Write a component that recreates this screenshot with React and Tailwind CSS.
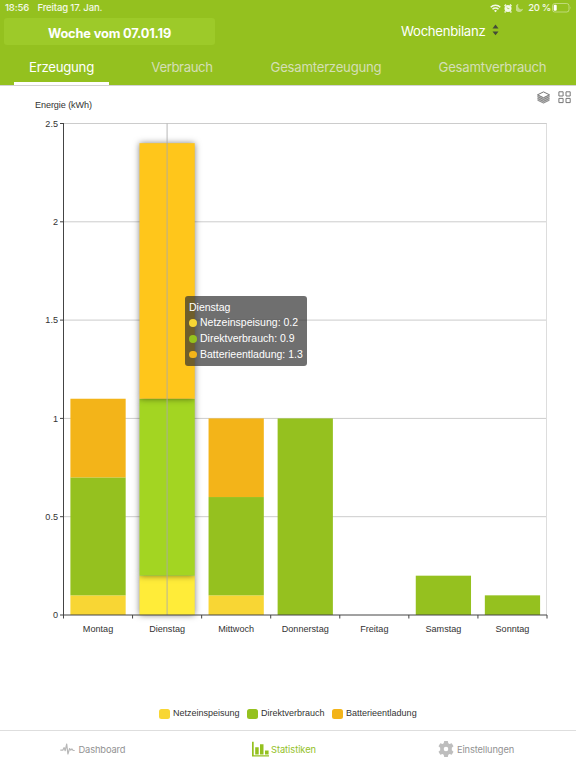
const days = [
  { name: "Montag", values: [0.1, 0.6, 0.4] },
  { name: "Dienstag", values: [0.2, 0.9, 1.3] },
  { name: "Mittwoch", values: [0.1, 0.5, 0.4] },
  { name: "Donnerstag", values: [0, 1, 0] },
  { name: "Freitag", values: [0, 0, 0] },
  { name: "Samstag", values: [0, 0.2, 0] },
  { name: "Sonntag", values: [0, 0.1, 0] }
];

const series = [
  { name: "Netzeinspeisung", color: "#f8d634", active: "#ffec39" },
  { name: "Direktverbrauch", color: "#95c11f", active: "#a3d522" },
  { name: "Batterieentladung", color: "#f3b419", active: "#ffc61b" }
];

const ticks = [0, 0.5, 1, 1.5, 2, 2.5];
const activeDay = 1;

const LEFT = 63.5;
const RIGHT = 547;
const BASE = 529;
const UNIT = 196.6;
const STEP = (RIGHT - LEFT) / days.length;

function StatusBar() {
  return (
    <div className="flex h-4 items-center pl-[5px] pr-1 text-[9.5px] font-medium text-white/90">
      <span className="w-[32.5px] tracking-[-0.1px]">18:56</span>
      <span className="tracking-[-0.13px]">Freitag 17. Jan.</span>
      <svg className="ml-auto" width="11" height="9" viewBox="0 0 11 9" fill="none" stroke="currentColor" strokeWidth="1.5">
        <path d="M.7 3.3a6.8 6.8 0 0 1 9.6 0M2.5 5.2a4.2 4.2 0 0 1 6 0" />
        <path d="M5.5 8.3 4 6.8a2.1 2.1 0 0 1 3 0z" fill="currentColor" stroke="none" />
      </svg>
      <svg className="ml-[3px]" width="8" height="9" viewBox="0 0 8 9">
        <circle cx="4" cy="4.5" r="3.5" fill="currentColor" />
        <path d="M.5 2 2 .6M7.5 2 6 .6M1.5 7.4.7 8.5M6.5 7.4l.8 1.1" stroke="currentColor" strokeWidth="1.3" />
        <path d="M2.7 3.4 4 4.6h1.3" fill="none" stroke="#94c11f" strokeWidth=".7" />
      </svg>
      <svg className="ml-1 text-white/45" width="7" height="8" viewBox="0 0 7 8">
        <path d="M2.2.3a3.8 3.8 0 1 0 4.6 5A3.6 3.6 0 0 1 2.2.3z" fill="currentColor" stroke="currentColor" strokeWidth=".5" />
      </svg>
      <span className="ml-[5px] whitespace-nowrap tracking-[-0.3px]">20 %</span>
      <svg className="ml-px" width="20" height="10" viewBox="0 0 20 10">
        <rect x=".5" y=".5" width="16.5" height="8.5" rx="2.3" fill="none" stroke="white" strokeOpacity=".4" />
        <rect x="1.7" y="1.8" width="3" height="6" rx="1" fill="white" />
        <path d="M18.3 3.3q1.2 1.5 0 3z" fill="white" fillOpacity=".4" />
      </svg>
    </div>
  );
}

function Header() {
  return (
    <header className="h-[86px] border-b border-[#d3d3d3] bg-[#94c11f]">
      <StatusBar />
      <div className="flex h-[30px] pl-1 pt-0.5">
        <button type="button" className="h-[27px] w-[211px] rounded-[3px] bg-[#9dca29] pt-[5px] text-[12.8px] font-bold tracking-[-0.15px] text-white">
          Woche vom 07.01.19
        </button>
        <button type="button" className="ml-[186px] flex h-[27px] items-center text-[13.2px] text-white">
          <span className="w-[85px] whitespace-nowrap text-left tracking-[-0.3px]">Wochenbilanz</span>
          <svg className="mb-1 ml-[6px]" width="7" height="12" viewBox="0 0 7 12" fill="#444c38">
            <path d="M3.5.6 6.5 4.5h-6zM3.5 11.2l3-3.8h-6z" />
          </svg>
        </button>
      </div>
      <nav className="flex h-[39px] pl-[14px] text-[13.2px] tracking-[-0.25px] text-[#d4dfb6]">
        <button type="button" className="w-[95px] border-b-[3px] border-white pt-[7px] text-white">Erzeugung</button>
        <button type="button" className="ml-[26px] w-[94px] pt-[4px] tracking-[-0.4px]">Verbrauch</button>
        <button type="button" className="ml-[28px] w-[138px] pt-[4px]">Gesamterzeugung</button>
        <button type="button" className="ml-[29px] w-[137px] pt-[4px]">Gesamtverbrauch</button>
      </nav>
    </header>
  );
}

function Bars({ day, index }) {
  const active = index === activeDay;
  const x = LEFT + STEP * (index + 0.1);
  let total = 0;
  const rects = day.values.map((value, i) => {
    total += value;
    return (
      <rect
        key={series[i].name}
        className={active ? "drop-shadow-[0_0_3px_rgba(0,0,0,0.5)]" : ""}
        x={x}
        y={BASE - total * UNIT}
        width={STEP * 0.8}
        height={value * UNIT}
        fill={active ? series[i].active : series[i].color}
      />
    );
  });
  return <g>{rects}</g>;
}

function Chart() {
  const pointer = LEFT + STEP * (activeDay + 0.5);

  return (
    <svg className="block font-['Liberation_Sans',sans-serif]" width="576" height="600" viewBox="0 0 576 600" fontSize="9.1" fill="#333">
      <text x="35" y="21.5" textLength="57">Energie (kWh)</text>

      <g fill="none" stroke="#777" strokeWidth="1">
        <path d="M537.5 8.8v5.4l6 2.8 6-2.8V8.8l-6 2.9z" fill="#bbb" stroke="none" />
        <path d="m543.5 5.9 6 2.9-6 2.9-6-2.9z" />
        <path d="M537.5 10.6l6 2.9 6-2.9M537.5 12.4l6 2.9 6-2.9M537.5 14.2l6 2.9 6-2.9" strokeWidth=".8" />
        <path d="M558.9 5.8h4.2v4.2h-4.2zM566 5.8h4.2v4.2H566zM558.9 12.4h4.2v4.2h-4.2zM566 12.4h4.2v4.2H566z" />
      </g>

      {ticks.map((tick) => {
        const y = BASE - tick * UNIT;
        return (
          <g key={tick}>
            {tick > 0 && <path d={`M${LEFT} ${y}H${RIGHT}`} stroke="#ccc" />}
            <text x="58" y={y + 3.2} textAnchor="end">{tick}</text>
          </g>
        );
      })}
      <path d={`M546.5 37.5V${BASE}`} stroke="#ddd" />

      {days.map((day, i) => (
        <Bars key={day.name} day={day} index={i} />
      ))}

      <path d={`M${pointer} 37.5V${BASE}`} stroke="#aaa" strokeOpacity=".65" strokeWidth="1.3" />

      <g stroke="#444" strokeWidth="1">
        <path d={`M${LEFT} 37V${BASE}H${RIGHT}`} fill="none" />
        {ticks.map((tick) => (
          <path key={tick} d={`M60 ${BASE - tick * UNIT}H${LEFT}`} />
        ))}
        {[0, 1, 2, 3, 4, 5, 6, 7].map((i) => (
          <path key={i} d={`M${LEFT + STEP * i} ${BASE}v3.5`} />
        ))}
      </g>

      {days.map((day, i) => (
        <text key={day.name} x={LEFT + STEP * (i + 0.5)} y="546" textAnchor="middle">{day.name}</text>
      ))}
    </svg>
  );
}

function Tooltip() {
  return (
    <div className="absolute left-[185px] top-[210px] h-[70px] w-[122px] whitespace-nowrap rounded-[3px] bg-[#323232]/70 pl-1 pt-[3.5px] font-['Liberation_Sans',sans-serif] text-[10.5px] leading-[15.7px] text-white">
      <p>{days[activeDay].name}</p>
      {series.map((item, i) => (
        <p key={item.name} className="flex items-center">
          <span className="mr-[3.5px] size-[7.5px] rounded-full" style={{ backgroundColor: item.color }} />
          {item.name}: {days[activeDay].values[i]}
        </p>
      ))}
    </div>
  );
}

function Legend() {
  return (
    <div className="flex h-[44px] pl-[159px] pt-[21px] font-['Liberation_Sans',sans-serif] text-[9px] leading-[13px] text-[#333]">
      {series.map((item) => (
        <div key={item.name} className="mr-[7.5px] flex h-[13px] items-center whitespace-nowrap">
          <span className="mr-[3.5px] h-[10px] w-[10.5px] rounded-[2.5px]" style={{ backgroundColor: item.color }} />
          {item.name}
        </div>
      ))}
    </div>
  );
}

function Footer() {
  return (
    <footer className="flex h-[38px] border-t border-[#dedede] pl-[60px] text-[9.3px] text-[#929292]">
      <button type="button" className="flex h-[35px] w-[192px] items-center">
        <svg width="15" height="12" viewBox="0 0 15 12" fill="none" stroke="#b8b8b8" strokeWidth="1.2" strokeLinejoin="round">
          <path d="M.3 7.2h2.5l1.3-2.6 1.1 3.1L6.7 1l1.2 10 1.7-5.5 1.2 1.7 1.1-1.3 1.2 1.6h1.6" />
        </svg>
        <span className="ml-[3.5px] pt-[2px] tracking-[-0.13px]">Dashboard</span>
      </button>
      <button type="button" className="flex h-[35px] w-[186px] items-center text-[#94c11f]">
        <svg width="17" height="16" viewBox="0 0 17 16" fill="currentColor">
          <path d="M0 .8h1.7v13.4H17v1.3H0zM3.2 6.2h3.5v7.4H3.2zM8 3.3h3.5v10.3H8zM13 9.5h3.6v4.1H13z" />
        </svg>
        <span className="ml-[2px] pt-[2px] tracking-[-0.05px]">Statistiken</span>
      </button>
      <button type="button" className="flex h-[35px] items-center">
        <svg width="16" height="16" viewBox="0 0 16 16" fill="#bebebe" fillRule="evenodd">
          <path d="M6.2 0h3.6l.5 2.3 1.2.7 2.2-.8 1.8 3-1.7 1.6v2.4l1.7 1.6-1.8 3-2.2-.8-1.2.7-.5 2.3H6.2l-.5-2.3-1.2-.7-2.2.8-1.8-3 1.7-1.6V6.8L.5 5.2l1.8-3 2.2.8 1.2-.7zM8 5.7a2.3 2.3 0 1 0 0 4.6 2.3 2.3 0 0 0 0-4.6z" />
        </svg>
        <span className="ml-[3px] pt-[2px] tracking-[-0.13px]">Einstellungen</span>
      </button>
    </footer>
  );
}

export default function App() {
  return (
    <div className="flex h-[768px] w-[576px] flex-col overflow-hidden bg-white font-[Inter,sans-serif]">
      <Header />
      <main className="relative">
        <Chart />
        <Tooltip />
        <Legend />
      </main>
      <Footer />
    </div>
  );
}
